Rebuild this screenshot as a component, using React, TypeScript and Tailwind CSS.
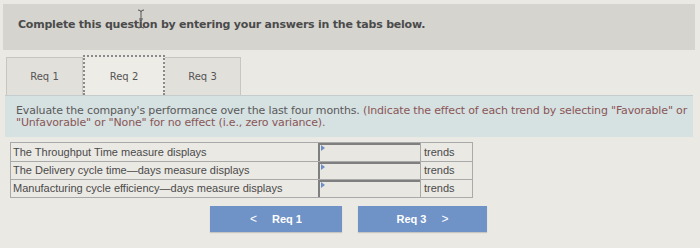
import React from "react";

const rows = [
  "The Throughput Time measure displays",
  "The Delivery cycle time\u2014days measure displays",
  "Manufacturing cycle efficiency\u2014days measure displays",
];

export default function App() {
  return (
    <div className="w-[700px] h-[248px] bg-[#ebe9e4] overflow-hidden pt-[4px] px-[3px] font-['DejaVu_Sans',sans-serif]">
      <div className="relative h-[46px] w-[692px] bg-[#d6d4cf] flex items-center pl-[15px] pb-[4px]">
        <span className="text-[11px] font-bold text-[#4b4b4b] tracking-[-0.22px]">
          Complete this question by entering your answers in the tabs below.
        </span>
        <svg className="absolute left-[134px] top-[5px]" width="8" height="20" viewBox="0 0 8 20">
          <path d="M1 1 Q4 1 4 3 Q4 1 7 1 M4 3 V17 M1 19 Q4 19 4 17 Q4 19 7 19 M2 10 H6" stroke="#555" strokeWidth="1" fill="none" />
        </svg>
      </div>

      <div className="flex h-[40px] mt-[5px] ml-[3px] items-end">
        <div className="w-[77px] h-[38px] bg-[#e2e0db] border border-b-0 border-[#c8c6c1] flex items-center justify-center text-[10px] text-[#555]">
          Req 1
        </div>
        <div className="w-[82px] h-[40px] bg-[#eeece7] border-2 border-b-0 border-dotted border-[#8a8a8a] flex items-center justify-center text-[10px] text-[#555]">
          Req 2
        </div>
        <div className="w-[76px] h-[38px] bg-[#e2e0db] border border-b-0 border-l-0 border-[#c8c6c1] flex items-center justify-center text-[10px] text-[#555]">
          Req 3
        </div>
      </div>

      <div className="w-[688px] ml-[2px] h-[42px] bg-[#d6e1e2] border-t border-[#c4cccd] pl-[11px] pr-[4px] pt-[9px] text-[11px] leading-[12px] tracking-[-0.16px]">
        <p className="text-[#8a5656]">
          <span className="text-[#5a5a5a]">Evaluate the company's performance over the last four months. </span>
          (Indicate the effect of each trend by selecting "Favorable" or "Unfavorable" or "None" for no effect (i.e., zero variance).
        </p>
      </div>

      <div className="ml-[7px] mt-[5px] w-[463px] border border-[#a9a9a9] font-['Liberation_Sans',Arial,sans-serif] text-[11px] text-[#4a4a4a]">
        {rows.map((r, i) => (
          <div key={i} className={`flex h-[18px] ${i > 0 ? "border-t border-[#a9a9a9]" : ""}`}>
            <div className="w-[307px] pl-[2px] flex items-center">{r}</div>
            <div className="relative w-[102px] border-t-2 border-l-2 border-[#7f7f7f] bg-[#e9e7e2]">
              <svg className="absolute left-[1px] top-[0px]" width="4" height="6" viewBox="0 0 4 6">
                <path d="M0 0 L4 3 L0 6 Z" fill="#6d8fc7" />
              </svg>
            </div>
            <div className="flex-1 border-l border-[#a9a9a9] pl-[3px] flex items-center">trends</div>
          </div>
        ))}
      </div>

      <div className="flex justify-center gap-[16px] mt-[8px] ml-[-3px] font-['Liberation_Sans',Arial,sans-serif]">
        <div className="w-[132px] h-[26px] bg-[#6f92c7] shadow-[0_1px_1px_rgba(0,0,0,0.15)] flex items-center justify-center text-white text-[11px] font-bold">
          <span className="mr-[15px] font-normal text-[12px]">&lt;</span>Req 1
        </div>
        <div className="w-[129px] h-[26px] bg-[#6f92c7] shadow-[0_1px_1px_rgba(0,0,0,0.15)] flex items-center justify-center text-white text-[11px] font-bold">
          Req 3<span className="ml-[15px] font-normal text-[12px]">&gt;</span>
        </div>
      </div>
    </div>
  );
}
